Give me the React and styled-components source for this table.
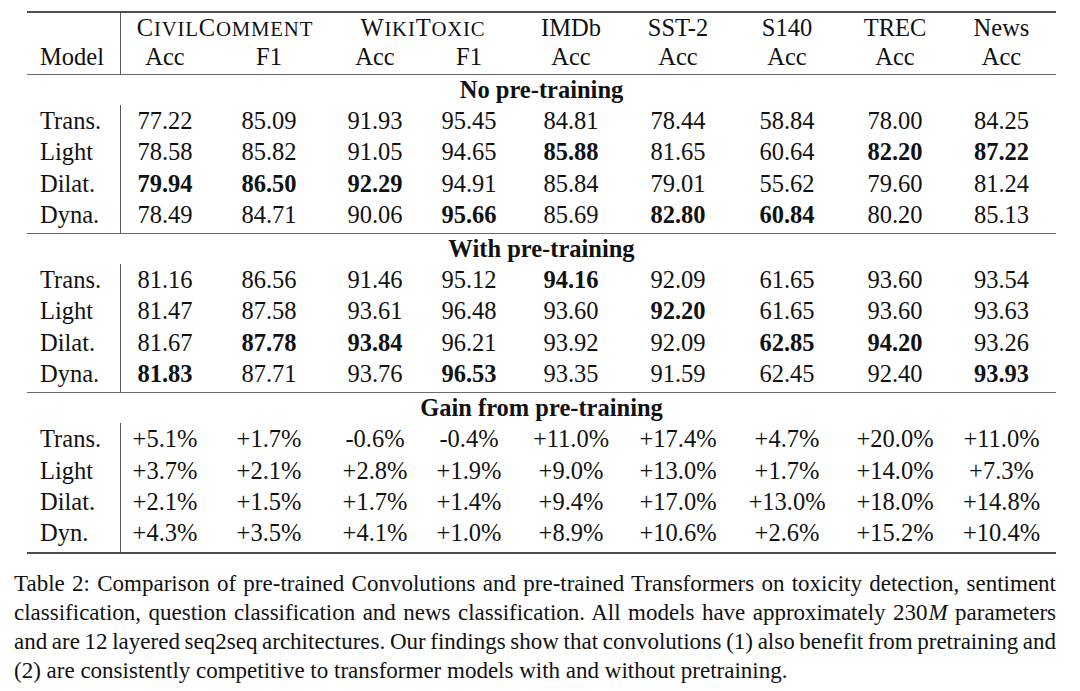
import React from "react";
import styled, { createGlobalStyle } from "styled-components";

const GlobalStyle = createGlobalStyle`
  html, body {
    margin: 0;
    padding: 0;
    background: #ffffff;
  }
  body {
    font-family: "Liberation Serif", "Times New Roman", serif;
    color: #111;
  }
`;

const COLS = "94px 88px 120px 92px 96px 108px 106px 112px 104px 109px";

const Page = styled.div`
  width: 1080px;
  padding-top: 11px;
`;

const Table = styled.div`
  margin-left: 27px;
  width: 1029px;
  font-family: "Liberation Serif", "Times New Roman", serif;
  font-size: 24.5px;
  color: #111;
`;

const Rule = styled.div`
  height: ${(p) => (p.$heavy ? 2 : 1)}px;
  background: ${(p) => (p.$heavy ? "#4d4d4d" : "#6a6a6a")};
`;

const Row = styled.div`
  display: grid;
  grid-template-columns: ${COLS};
  height: ${(p) => p.$h + (p.$pad || 0)}px;
  line-height: ${(p) => p.$h}px;
`;

const ModelCell = styled.div`
  padding-left: 13px;
  border-right: 1px solid #555;
  white-space: nowrap;
`;

const Cell = styled.div`
  text-align: center;
  white-space: nowrap;
  font-weight: ${(p) => (p.$bold ? 700 : 400)};
`;

const SpanCell = styled.div`
  grid-column: span ${(p) => p.$span || 1};
  text-align: center;
  white-space: nowrap;
`;

const Small = styled.span`
  font-size: 0.85em;
`;

const ScWord = styled.span`
  letter-spacing: 0.8px;
`;

const SectionRow = styled.div`
  height: 30px;
  line-height: 30px;
  text-align: center;
  font-weight: 700;
`;

const Caption = styled.div`
  margin-top: 15px;
  margin-left: 14px;
  width: 1042px;
  font-family: "Liberation Serif", "Times New Roman", serif;
  font-size: 23px;
  line-height: 29px;
  color: #111;
`;

const CapLine = styled.div`
  text-align: ${(p) => (p.$last ? "left" : "justify")};
  text-align-last: ${(p) => (p.$last ? "left" : "justify")};
  word-spacing: ${(p) => (p.$last ? "0px" : "-2px")};
`;

const MathI = styled.i`
  font-style: italic;
  margin-left: 1px;
`;

function SmallCaps({ text }) {
  const parts = [];
  let buf = "";
  let lower = null;
  for (const ch of text) {
    const isLower = ch === ch.toLowerCase() && ch !== ch.toUpperCase();
    if (lower === null || isLower === lower) {
      buf += ch;
    } else {
      parts.push([buf, lower]);
      buf = ch;
    }
    lower = isLower;
  }
  if (buf) parts.push([buf, lower]);
  return (
    <ScWord>
      {parts.map(([s, l], i) =>
        l ? <Small key={i}>{s.toUpperCase()}</Small> : <span key={i}>{s}</span>
      )}
    </ScWord>
  );
}

const noPre = [
  ["Trans.", ["77.22", "85.09", "91.93", "95.45", "84.81", "78.44", "58.84", "78.00", "84.25"]],
  ["Light", ["78.58", "85.82", "91.05", "94.65", "85.88*", "81.65", "60.64", "82.20*", "87.22*"]],
  ["Dilat.", ["79.94*", "86.50*", "92.29*", "94.91", "85.84", "79.01", "55.62", "79.60", "81.24"]],
  ["Dyna.", ["78.49", "84.71", "90.06", "95.66*", "85.69", "82.80*", "60.84*", "80.20", "85.13"]],
];

const withPre = [
  ["Trans.", ["81.16", "86.56", "91.46", "95.12", "94.16*", "92.09", "61.65", "93.60", "93.54"]],
  ["Light", ["81.47", "87.58", "93.61", "96.48", "93.60", "92.20*", "61.65", "93.60", "93.63"]],
  ["Dilat.", ["81.67", "87.78*", "93.84*", "96.21", "93.92", "92.09", "62.85*", "94.20*", "93.26"]],
  ["Dyna.", ["81.83*", "87.71", "93.76", "96.53*", "93.35", "91.59", "62.45", "92.40", "93.93*"]],
];

const gain = [
  ["Trans.", ["+5.1%", "+1.7%", "-0.6%", "-0.4%", "+11.0%", "+17.4%", "+4.7%", "+20.0%", "+11.0%"]],
  ["Light", ["+3.7%", "+2.1%", "+2.8%", "+1.9%", "+9.0%", "+13.0%", "+1.7%", "+14.0%", "+7.3%"]],
  ["Dilat.", ["+2.1%", "+1.5%", "+1.7%", "+1.4%", "+9.4%", "+17.0%", "+13.0%", "+18.0%", "+14.8%"]],
  ["Dyn.", ["+4.3%", "+3.5%", "+4.1%", "+1.0%", "+8.9%", "+10.6%", "+2.6%", "+15.2%", "+10.4%"]],
];

function DataRow({ model, values, last }) {
  return (
    <Row $h={31.3} $pad={last ? 3 : 0}>
      <ModelCell>{model}</ModelCell>
      {values.map((v, i) => {
        const bold = v.endsWith("*");
        return (
          <Cell key={i} $bold={bold}>
            {bold ? v.slice(0, -1) : v}
          </Cell>
        );
      })}
    </Row>
  );
}

function Block({ title, rows }) {
  return (
    <>
      <SectionRow>{title}</SectionRow>
      {rows.map(([m, vals], i) => (
        <DataRow key={m} model={m} values={vals} last={i === rows.length - 1} />
      ))}
    </>
  );
}

export default function App() {
  return (
    <Page>
      <GlobalStyle />
      <Table>
        <Rule $heavy />
        <Row $h={29}>
          <ModelCell />
          <SpanCell $span={2}>
            <SmallCaps text="CivilComment" />
          </SpanCell>
          <SpanCell $span={2}>
            <SmallCaps text="WikiToxic" />
          </SpanCell>
          <SpanCell>IMDb</SpanCell>
          <SpanCell>SST-2</SpanCell>
          <SpanCell>S140</SpanCell>
          <SpanCell>TREC</SpanCell>
          <SpanCell>News</SpanCell>
        </Row>
        <Row $h={29} $pad={3}>
          <ModelCell>Model</ModelCell>
          <Cell>Acc</Cell>
          <Cell>F1</Cell>
          <Cell>Acc</Cell>
          <Cell>F1</Cell>
          <Cell>Acc</Cell>
          <Cell>Acc</Cell>
          <Cell>Acc</Cell>
          <Cell>Acc</Cell>
          <Cell>Acc</Cell>
        </Row>
        <Rule />
        <Block title="No pre-training" rows={noPre} />
        <Rule />
        <Block title="With pre-training" rows={withPre} />
        <Rule />
        <Block title="Gain from pre-training" rows={gain} />
        <Rule $heavy />
      </Table>
      <Caption>
        <CapLine>
          Table 2: Comparison of pre-trained Convolutions and pre-trained Transformers on toxicity detection, sentiment
        </CapLine>
        <CapLine>
          classification, question classification and news classification. All models have approximately 230
          <MathI>M</MathI> parameters
        </CapLine>
        <CapLine>
          and are 12 layered seq2seq architectures. Our findings show that convolutions (1) also benefit from pretraining and
        </CapLine>
        <CapLine $last>
          (2) are consistently competitive to transformer models with and without pretraining.
        </CapLine>
      </Caption>
    </Page>
  );
}
